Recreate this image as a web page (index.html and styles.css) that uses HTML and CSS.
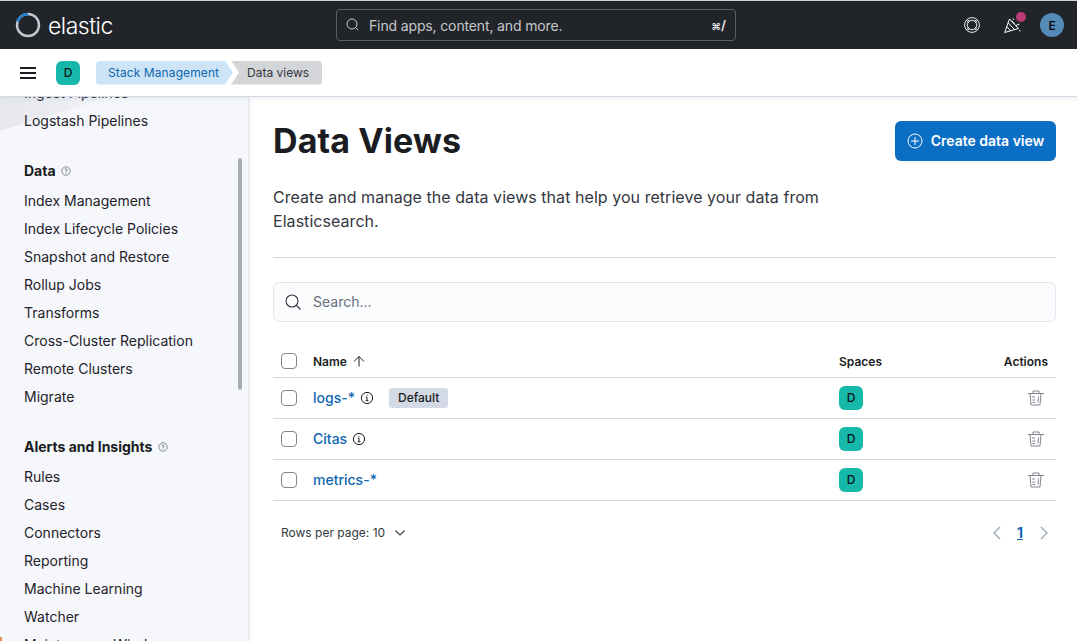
FILE: index.html
```html
<!DOCTYPE html>
<html lang="en">
    <head>
        <meta charset="UTF-8">
        <meta name="viewport" content="width=device-width, initial-scale=1.0">
        <title>Data Views - Elastic</title>
        <link rel="stylesheet" href="styles.css">
    </head>
    <body>
        <header class="topbar">
            <div class="brand">
                <svg class="brand-ring" width="26" height="26" viewBox="0 0 26 26" fill="none" stroke-width="2.4">
                    <circle cx="13" cy="13" r="11" stroke="#c4cad3"/>
                    <path d="M2.6 9.5A11 11 0 0 1 13 2" stroke="#1a7fd0"/>
                </svg>
                <span class="brand-name">elastic</span>
            </div>
            <div class="global-search">
                <svg width="16" height="16" viewBox="0 0 16 16" fill="none" stroke="#c9cdd3" stroke-width="1">
                    <circle cx="7" cy="7" r="5"/>
                    <path d="M11 11l2 2"/>
                </svg>
                <span class="global-search-text">Find apps, content, and more.</span>
                <span class="shortcut"><span class="shortcut-cmd">⌘</span>/</span>
            </div>
            <div class="top-actions">
                <svg width="16" height="16" viewBox="0 0 16 16" fill="none" stroke="#fff" stroke-width=".9">
                    <circle cx="8" cy="8" r="7.4"/>
                    <circle cx="8" cy="8" r="4.7"/>
                    <path d="M2.300 3.300l2.400 2.400M3.300 2.300l2.400 2.400M13.700 3.300l-2.400 2.400M12.700 2.300l-2.400 2.400M2.300 12.700l2.400-2.400M3.300 13.700l2.400-2.400M13.700 12.700l-2.400-2.400M12.700 13.700l-2.400-2.400"/>
                </svg>
                <div class="cheer">
                    <svg width="17" height="17" viewBox="0 0 17 17" fill="none" stroke="#fff" stroke-width="1">
                        <path d="M5.500 2L.7 15.500 14.500 11.500z"/>
                        <path d="M4.200 5.800l6.300 6.800M2.800 9.500l4 4.500M7.500 3.500l3 3.300"/>
                        <path d="M9 1.500l1 1.500M15 13.500l1.500.5M12 8.500l3.500-1.500"/>
                    </svg>
                    <span class="cheer-dot"></span>
                </div>
                <span class="avatar">E</span>
            </div>
        </header>

        <div class="crumbbar">
            <svg class="menu-icon" width="16" height="12" viewBox="0 0 16 12" fill="#1a1c21">
                <rect y="0" width="16" height="2"/>
                <rect y="5" width="16" height="2"/>
                <rect y="10" width="16" height="2"/>
            </svg>
            <span class="space-badge">D</span>
            <nav class="crumbs">
                <a class="crumb crumb-first">Stack Management</a>
                <a class="crumb crumb-last">Data views</a>
            </nav>
        </div>

        <div class="layout">
            <aside class="sidenav">
                <div class="sidenav-list">
                    <a class="nav-item">Ingest Pipelines</a>
                    <a class="nav-item">Logstash Pipelines</a>

                    <h4 class="nav-title">Data
                        <svg width="10" height="10" viewBox="0 0 10 10" fill="none" stroke="#69707d" stroke-width=".8">
                            <circle cx="5" cy="5" r="4.2"/>
                            <path d="M3.800 3.800A1.200 1.200 0 1 1 5 5.200v.8M5 6.800v.8"/>
                        </svg>
                    </h4>
                    <a class="nav-item">Index Management</a>
                    <a class="nav-item">Index Lifecycle Policies</a>
                    <a class="nav-item">Snapshot and Restore</a>
                    <a class="nav-item">Rollup Jobs</a>
                    <a class="nav-item">Transforms</a>
                    <a class="nav-item">Cross-Cluster Replication</a>
                    <a class="nav-item">Remote Clusters</a>
                    <a class="nav-item">Migrate</a>

                    <h4 class="nav-title">Alerts and Insights
                        <svg width="10" height="10" viewBox="0 0 10 10" fill="none" stroke="#69707d" stroke-width=".8">
                            <circle cx="5" cy="5" r="4.2"/>
                            <path d="M3.800 3.800A1.200 1.200 0 1 1 5 5.200v.8M5 6.800v.8"/>
                        </svg>
                    </h4>
                    <a class="nav-item">Rules</a>
                    <a class="nav-item">Cases</a>
                    <a class="nav-item">Connectors</a>
                    <a class="nav-item">Reporting</a>
                    <a class="nav-item">Machine Learning</a>
                    <a class="nav-item">Watcher</a>
                    <a class="nav-item">Maintenance Windows</a>
                </div>
                <span class="nav-scroll"></span>
            </aside>

            <main class="content">
                <div class="page-head">
                    <h1>Data Views</h1>
                    <button class="btn-create">
                        <svg width="16" height="16" viewBox="0 0 16 16" fill="none" stroke="#fff" stroke-width="1">
                            <circle cx="8" cy="8" r="7"/>
                            <path d="M8 4v8M4 8h8"/>
                        </svg>
                        Create data view
                    </button>
                </div>
                <p class="page-desc">Create and manage the data views that help you retrieve your data from Elasticsearch.</p>
                <hr class="divider">

                <div class="searchbox">
                    <svg width="18" height="18" viewBox="0 0 18 18" fill="none" stroke="#343741" stroke-width="1.1">
                        <circle cx="8" cy="8" r="6"/>
                        <path d="M12.500 12.500l4 4"/>
                    </svg>
                    <span>Search...</span>
                </div>

                <table class="views">
                    <thead>
                        <tr>
                            <th class="col-check"><span class="check"></span></th>
                            <th class="col-name">Name
                                <svg class="sort" width="12" height="12" viewBox="0 0 12 12" fill="none" stroke="#1a1c21" stroke-width="1">
                                    <path d="M1 6.500L6 1.500l5 5M6 1.500V11.500"/>
                                </svg>
                            </th>
                            <th class="col-spaces">Spaces</th>
                            <th class="col-actions">Actions</th>
                        </tr>
                    </thead>
                    <tbody>
                        <tr>
                            <td class="col-check"><span class="check"></span></td>
                            <td class="col-name">
                                <div class="name-cell">
                                    <a>logs-*</a>
                                    <svg class="info" width="14" height="14" viewBox="0 0 14 14" fill="none" stroke="#1a1c21" stroke-width="1">
                                        <circle cx="7" cy="7" r="5.600"/>
                                        <path d="M5.800 6.200H7v3.600M5.600 9.800h2.800M7 3.800v1"/>
                                    </svg>
                                    <span class="default-tag">Default</span>
                                </div>
                            </td>
                            <td class="col-spaces"><span class="space-badge">D</span></td>
                            <td class="col-actions">
                                <svg class="trash" width="16" height="16" viewBox="0 0 16 16" fill="none" stroke="#808590" stroke-width="1">
                                    <path d="M0 3.500h16M5 3.500V1h6v2.500M2 3.500l1 11.500h9l1-11.500M4 7h3M4.300 10h3M4.500 12.500h2.500M10.500 6.500l-.5 6"/>
                                </svg>
                            </td>
                        </tr>
                        <tr>
                            <td class="col-check"><span class="check"></span></td>
                            <td class="col-name">
                                <div class="name-cell">
                                    <a>Citas</a>
                                    <svg class="info" width="14" height="14" viewBox="0 0 14 14" fill="none" stroke="#1a1c21" stroke-width="1">
                                        <circle cx="7" cy="7" r="5.600"/>
                                        <path d="M5.800 6.200H7v3.600M5.600 9.800h2.800M7 3.800v1"/>
                                    </svg>
                                </div>
                            </td>
                            <td class="col-spaces"><span class="space-badge">D</span></td>
                            <td class="col-actions">
                                <svg class="trash" width="16" height="16" viewBox="0 0 16 16" fill="none" stroke="#808590" stroke-width="1">
                                    <path d="M0 3.500h16M5 3.500V1h6v2.500M2 3.500l1 11.500h9l1-11.500M4 7h3M4.300 10h3M4.500 12.500h2.500M10.500 6.500l-.5 6"/>
                                </svg>
                            </td>
                        </tr>
                        <tr>
                            <td class="col-check"><span class="check"></span></td>
                            <td class="col-name">
                                <div class="name-cell">
                                    <a>metrics-*</a>
                                </div>
                            </td>
                            <td class="col-spaces"><span class="space-badge">D</span></td>
                            <td class="col-actions">
                                <svg class="trash" width="16" height="16" viewBox="0 0 16 16" fill="none" stroke="#808590" stroke-width="1">
                                    <path d="M0 3.500h16M5 3.500V1h6v2.500M2 3.500l1 11.500h9l1-11.500M4 7h3M4.300 10h3M4.500 12.500h2.500M10.500 6.500l-.5 6"/>
                                </svg>
                            </td>
                        </tr>
                    </tbody>
                </table>

                <div class="table-foot">
                    <div class="rows-per-page">Rows per page: 10
                        <svg width="10" height="6" viewBox="0 0 10 6" fill="none" stroke="#343741" stroke-width="1.1">
                            <path d="M.5.5L5 5l4.500-4.500"/>
                        </svg>
                    </div>
                    <div class="pager">
                        <svg class="pager-prev" width="8" height="14" viewBox="0 0 8 14" fill="none" stroke="#98a2b3" stroke-width="1.2">
                            <path d="M7 1L1 7l6 6"/>
                        </svg>
                        <a class="page-current">1</a>
                        <svg width="8" height="14" viewBox="0 0 8 14" fill="none" stroke="#98a2b3" stroke-width="1.2">
                            <path d="M1 1l6 6-6 6"/>
                        </svg>
                    </div>
                </div>
            </main>
        </div>
    </body>
</html>
```

FILE: styles.css
```css
* {
    box-sizing: border-box;
}

html,
body {
    height: 100%;
}

body {
    margin: 0;
    overflow: hidden;
    display: flex;
    flex-direction: column;
    font-family: 'Inter', 'Liberation Sans', sans-serif;
    font-size: 14px;
    color: #1a1c21;
    background-color: #fff;
}

.topbar {
    height: 49px;
    flex: none;
    display: flex;
    align-items: center;
    padding: 0 13px 0 15px;
    background-color: #212429;
    border-top: 1px solid #cfd2d6;
    color: #fff;
}

.brand {
    width: 321px;
    display: flex;
    align-items: center;
    gap: 7px;
}

.brand-name {
    padding-top: 1px;
    font-size: 23px;
    font-weight: 300;
    line-height: 26px;
    letter-spacing: -0.5px;
}

.global-search {
    width: 400px;
    height: 32px;
    display: flex;
    align-items: center;
    padding: 0 9px 0 8px;
    border: 1px solid #5b5f66;
    border-radius: 4px;
}

.global-search-text {
    flex: 1;
    margin-left: 8px;
    letter-spacing: -0.14px;
    color: #c6c8cb;
}

.shortcut {
    font-size: 13px;
    font-weight: 600;
    color: #e6e7e9;
}

.shortcut-cmd {
    font-size: 10px;
}

.top-actions {
    flex: 1;
    display: flex;
    justify-content: flex-end;
    align-items: center;
    gap: 24px;
}

.cheer {
    position: relative;
    width: 16px;
    height: 17px;
}

.cheer-dot {
    position: absolute;
    top: -5px;
    right: -6px;
    width: 10px;
    height: 10px;
    border-radius: 50%;
    background-color: #bc3a76;
}

.avatar {
    width: 24px;
    height: 24px;
    display: flex;
    align-items: center;
    justify-content: center;
    margin-left: -4px;
    border-radius: 50%;
    background-color: #5589b8;
    font-size: 12px;
    font-weight: 500;
    color: #000;
}

.crumbbar {
    position: relative;
    z-index: 2;
    height: 48px;
    flex: none;
    display: flex;
    align-items: center;
    padding: 0 0 0 20px;
    background-color: #fff;
    border-bottom: 1px solid #d3dae6;
    box-shadow: 0 2px 4px rgba(152, 162, 179, 0.15);
}

.menu-icon {
    margin-right: 20px;
}

.space-badge {
    width: 24px;
    height: 24px;
    display: inline-flex;
    align-items: center;
    justify-content: center;
    border-radius: 6px;
    background-color: #16b8a9;
    font-size: 12px;
    font-weight: 500;
    color: #07101a;
}

.crumbs {
    display: flex;
    margin-left: 16px;
    font-size: 12px;
    line-height: 24px;
}

.crumb {
    display: block;
    height: 24px;
}

.crumb-first {
    padding: 0 0 0 12px;
    width: 137px;
    color: #0f66b1;
    background-color: #cce4f5;
    border-radius: 4px 0 0 4px;
    letter-spacing: 0.1px;
    clip-path: polygon(0 0, 94% 0, 100% 50%, 94% 100%, 0 100%);
}

.crumb-last {
    width: 91px;
    margin-left: -2px;
    padding-left: 16px;
    color: #343741;
    background-color: #d4d5d8;
    border-radius: 0 4px 4px 0;
    clip-path: polygon(0 0, 100% 0, 100% 100%, 0 100%, 8px 50%);
}

.layout {
    flex: 1;
    min-height: 0;
    display: flex;
}

.sidenav {
    position: relative;
    width: 249px;
    flex: none;
    overflow: hidden;
    background-color: #f5f7fb;
    border-right: 1px solid #e6e9f0;
    box-shadow: 1px 0 3px rgba(152, 162, 179, 0.2);
}

/* the pale wedge top left and the orange corner bottom left */
.sidenav::before {
    content: "";
    position: absolute;
    top: 0;
    left: 0;
    width: 110px;
    height: 34px;
    background: linear-gradient(to right, #e5e7ec, #f1f3f7);
    clip-path: polygon(0 0, 100% 0, 0 100%);
}

.sidenav::after {
    content: "";
    position: absolute;
    bottom: 0;
    left: 0;
    width: 2px;
    height: 4px;
    background-color: #e58a5c;
}

.sidenav-list {
    position: relative;
    margin-top: -18px;
    padding-left: 24px;
}

.nav-item {
    display: block;
    height: 28px;
    line-height: 28px;
    color: #1f2229;
}

.nav-title {
    height: 22px;
    margin: 25px 0 5px;
    line-height: 22px;
    font-size: 14px;
    font-weight: 700;
}

.nav-title svg {
    margin-left: 2px;
}

.nav-scroll {
    position: absolute;
    top: 61px;
    right: 6px;
    width: 4px;
    height: 232px;
    border-radius: 2px;
    background-color: #a9adb5;
}

.content {
    flex: 1;
    min-width: 0;
    padding: 24px 21px 0 24px;
}

.page-head {
    display: flex;
    justify-content: space-between;
    align-items: flex-start;
    height: 40px;
}

h1 {
    margin: 0;
    font-size: 34px;
    font-weight: 700;
    line-height: 40px;
    letter-spacing: 0.1px;
}

.btn-create {
    width: 161px;
    height: 40px;
    display: flex;
    align-items: center;
    justify-content: center;
    gap: 8px;
    padding: 0 0 1px;
    border: none;
    border-radius: 6px;
    background-color: #0b6ec5;
    color: #fff;
    font-family: inherit;
    font-size: 14px;
    font-weight: 600;
}

.page-desc {
    width: 590px;
    margin: 24px 0 0;
    font-size: 16px;
    line-height: 24px;
    letter-spacing: 0.05px;
    color: #343741;
}

.divider {
    height: 1px;
    margin: 24px 0;
    border: none;
    background-color: #d3dae6;
}

.searchbox {
    height: 40px;
    display: flex;
    align-items: center;
    gap: 11px;
    padding: 0 0 1px 10px;
    border: 1px solid #e3e6ed;
    border-radius: 6px;
    background-color: #fbfcfd;
    color: #69707d;
}

.views {
    width: 100%;
    margin-top: 16px;
    border-collapse: collapse;
    table-layout: fixed;
}

.views th {
    height: 39px;
    padding: 0 0 8px;
    vertical-align: bottom;
    font-size: 12px;
    font-weight: 600;
    text-align: left;
    border-bottom: 1px solid #d3dae6;
}

.views td {
    height: 41px;
    padding: 0;
    border-bottom: 1px solid #d3dae6;
}

.views .col-check {
    width: 40px;
    padding-left: 8px;
}

.name-cell {
    display: flex;
    align-items: center;
}

.name-cell a {
    color: #0f66b1;
    font-weight: 500;
}

.views .col-spaces {
    width: 150px;
}

.views .col-actions {
    width: 67px;
    padding-right: 8px;
    text-align: right;
}

.col-spaces .space-badge {
    display: flex;
}

.check {
    display: block;
    width: 16px;
    height: 16px;
    border: 1px solid #808590;
    border-radius: 4px;
    background-color: #fff;
}

.sort {
    margin-left: 3px;
    vertical-align: -1px;
}

.info {
    margin-left: 5px;
}

.trash {
    margin-right: 4px;
    vertical-align: -3px;
}

.default-tag {
    height: 20px;
    margin-left: 15px;
    padding: 0 9px;
    border-radius: 3px;
    background-color: #d3dae6;
    font-size: 12px;
    font-weight: 500;
    line-height: 20px;
}

.table-foot {
    display: flex;
    justify-content: space-between;
    align-items: center;
    height: 32px;
    margin-top: 16px;
    padding: 0 8px;
}

.rows-per-page {
    display: flex;
    align-items: center;
    gap: 10px;
    font-size: 12px;
    color: #343741;
}

.pager {
    display: flex;
    align-items: center;
    gap: 17px;
}

.pager-prev {
    margin-right: -1px;
}

.page-current {
    font-size: 14px;
    font-weight: 700;
    color: #0f66b1;
    text-decoration: underline;
}
```
